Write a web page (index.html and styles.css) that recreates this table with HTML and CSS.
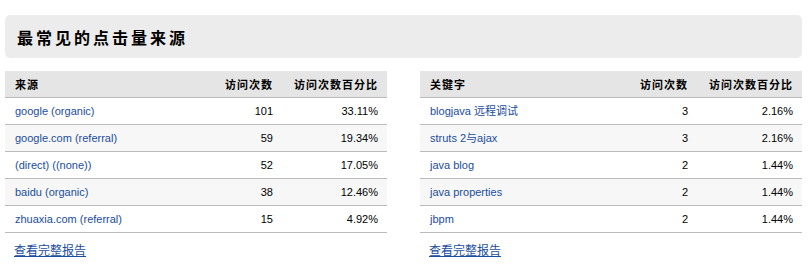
FILE: index.html
```html
<!DOCTYPE html>
<html lang="zh">
<head>
<meta charset="utf-8">
<title>最常见的点击量来源</title>
<link rel="stylesheet" href="styles.css">
</head>
<body>
<div class="page">
  <div class="title-box"><h2 class="title">最常见的点击量来源</h2></div>
  <div class="panels">
    <div class="panel">
      <table class="data">
        <colgroup><col><col class="c2"><col class="c3"></colgroup>
        <thead>
          <tr><th class="l">来源</th><th class="r">访问次数</th><th class="r">访问次数百分比</th></tr>
        </thead>
        <tbody>
          <tr><td><a href="#">google (organic)</a></td><td class="r">101</td><td class="r">33.11%</td></tr>
          <tr class="alt"><td><a href="#">google.com (referral)</a></td><td class="r">59</td><td class="r">19.34%</td></tr>
          <tr><td><a href="#">(direct) ((none))</a></td><td class="r">52</td><td class="r">17.05%</td></tr>
          <tr class="alt"><td><a href="#">baidu (organic)</a></td><td class="r">38</td><td class="r">12.46%</td></tr>
          <tr><td><a href="#">zhuaxia.com (referral)</a></td><td class="r">15</td><td class="r">4.92%</td></tr>
        </tbody>
      </table>
      <div class="more"><a href="#">查看完整报告</a></div>
    </div>
    <div class="panel">
      <table class="data">
        <colgroup><col><col class="c2"><col class="c3"></colgroup>
        <thead>
          <tr><th class="l">关键字</th><th class="r">访问次数</th><th class="r">访问次数百分比</th></tr>
        </thead>
        <tbody>
          <tr><td><a href="#">blogjava 远程调试</a></td><td class="r">3</td><td class="r">2.16%</td></tr>
          <tr class="alt"><td><a href="#">struts 2与ajax</a></td><td class="r">3</td><td class="r">2.16%</td></tr>
          <tr><td><a href="#">java blog</a></td><td class="r">2</td><td class="r">1.44%</td></tr>
          <tr class="alt"><td><a href="#">java properties</a></td><td class="r">2</td><td class="r">1.44%</td></tr>
          <tr><td><a href="#">jbpm</a></td><td class="r">2</td><td class="r">1.44%</td></tr>
        </tbody>
      </table>
      <div class="more"><a href="#">查看完整报告</a></div>
    </div>
  </div>
</div>
</body>
</html>
```
FILE: styles.css
```css
html, body {
  margin: 0;
  padding: 0;
  background: #fff;
}
body {
  font-family: "Liberation Sans", Arial, "Noto Sans CJK SC", sans-serif;
  color: #000;
}
.page {
  width: 797px;
  padding: 15px 6px 0 5px;
}
.title-box {
  background: #ececec;
  border-radius: 5px;
  height: 43px;
  display: flex;
  align-items: center;
  padding-left: 12px;
}
.title {
  margin: 0;
  font-family: "Noto Sans CJK SC", sans-serif;
  font-size: 16px;
  font-weight: bold;
  letter-spacing: 3px;
  line-height: 20px;
}
.panels {
  display: grid;
  grid-template-columns: 382px 382px;
  column-gap: 33px;
  margin-top: 13px;
}
.data {
  width: 100%;
  border-collapse: collapse;
  table-layout: fixed;
  font-size: 11px;
}
.data col.c2 { width: 76px; }
.data col.c3 { width: 105px; }
.data th {
  background: #e5e5e5;
  height: 26px;
  padding: 0 9px 0 10px;
  font-family: "Noto Sans CJK SC", sans-serif;
  font-size: 11px;
  font-weight: bold;
  letter-spacing: 1px;
  border-bottom: 1px solid #bbb;
  white-space: nowrap;
}
.data th.r { letter-spacing: 1px; }
.data td {
  height: 26px;
  padding: 0 9px 0 10px;
  border-bottom: 1px solid #bbb;
  white-space: nowrap;
  line-height: 14px;
}
.data tr.alt td { background: #f7f7f7; }
.l { text-align: left; }
.r { text-align: right; }
.data a {
  color: #1a4d9e;
  text-decoration: none;
}
.more {
  padding: 9px 9px 0;
  font-family: "Noto Sans CJK SC", sans-serif;
  font-size: 12px;
  line-height: 16px;
}
.more a {
  color: #1a4d9e;
  text-decoration: underline;
}
```
